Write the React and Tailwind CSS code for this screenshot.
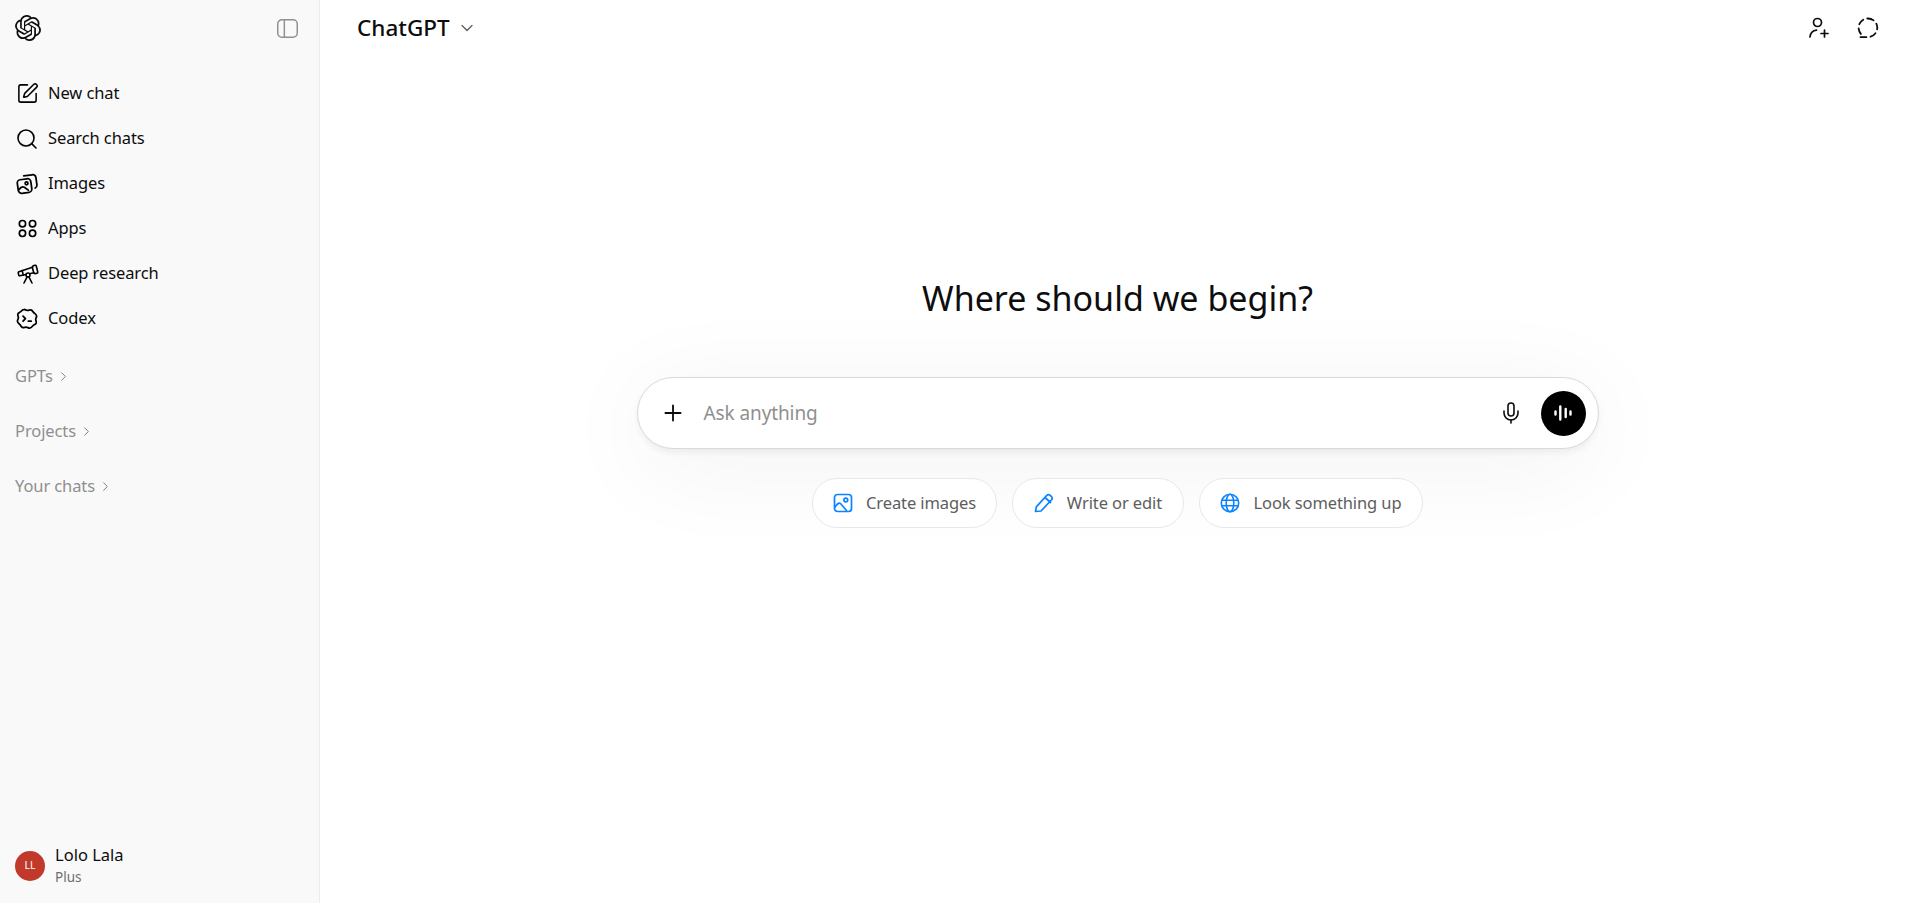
import { ChevronDown, ChevronRight, Mic, Plus, Search, SquarePen, Telescope } from 'lucide-react'
import { SiOpenai } from 'react-icons/si'

function ImagesIcon({ className }) {
  return (
    <svg className={className} viewBox="0 0 20 20" fill="none" stroke="currentColor" strokeWidth="1.6" strokeLinecap="round" strokeLinejoin="round">
      <rect x="1.6" y="5.6" width="12.4" height="12.4" rx="3" transform="rotate(-8 8 12)" />
      <path d="M7 2.6 14.6 1.6c1.8-.2 3.2.9 3.5 2.6l.9 6.4c.2 1.4-.4 2.5-1.5 3.1" />
      <circle cx="9.6" cy="9.4" r="1.3" />
      <path d="M2.6 15.2c1.6-2.4 3.4-3.2 5-2.2l3.6 2.6" />
    </svg>
  )
}

function AppsIcon({ className }) {
  return (
    <svg className={className} viewBox="0 0 20 20" fill="none" stroke="currentColor" strokeWidth="1.6">
      <circle cx="5.2" cy="5.4" r="3" />
      <circle cx="14.800" cy="5.400" r="3" />
      <circle cx="5.200" cy="14.600" r="3" />
      <circle cx="14.800" cy="14.600" r="3" />
    </svg>
  )
}

function CodexIcon({ className }) {
  return (
    <svg className={className} viewBox="0 0 20 20" fill="none" stroke="currentColor" strokeWidth="1.6" strokeLinecap="round" strokeLinejoin="round">
      <path d="M7 1.400c1.500-.3 2.300.8 3.500.8 1.300 0 2.200-.8 3.500-.3 1.200.5 1.400 1.700 2.200 2.400.9.800 2.200 1.200 2.500 2.800.2 1.300-.8 2-.8 3.100 0 1.200.9 2.100.4 3.500-.5 1.300-1.900 1.500-2.800 2.300-1 .9-1.400 2.200-3 2.300-1.300.1-2.100-.9-3.300-.9-1.200 0-2.100.7-3.400.2-1.300-.5-1.600-1.900-2.400-2.700-.9-.9-2-1.400-2.100-2.900-.1-1.300.9-2 .9-3.100 0-1.200-.9-2-.5-3.400.4-1.300 1.700-1.500 2.600-2.200.8-.7 1.200-1.700 2.700-1.900Z" />
      <path d="m6.400 7.400 2.200 2.300-2.200 2.300M11.200 12h2.600" />
    </svg>
  )
}

function PanelIcon({ className }) {
  return (
    <svg className={className} viewBox="0 0 20 20" fill="none" stroke="currentColor" strokeWidth="1.4">
      <rect x="0.7" y="1.7" width="18.600" height="16.600" rx="4" />
      <path d="M7 2v16" />
    </svg>
  )
}

function AddPersonIcon({ className }) {
  return (
    <svg className={className} viewBox="0 0 22 22" fill="none" stroke="currentColor" strokeWidth="1.7" strokeLinecap="round">
      <circle cx="9.500" cy="5.500" r="4" />
      <path d="M2 20c.5-4 2.800-6.500 6.500-6.800M16.500 13v7M13 16.500h7" />
    </svg>
  )
}

function TempChatIcon({ className }) {
  return (
    <svg className={className} viewBox="0 0 22 22" fill="none" stroke="currentColor" strokeWidth="1.800" strokeDasharray="6 4.200" strokeLinecap="round" strokeLinejoin="round">
      <path d="M11 1.500a9.300 9.300 0 0 1 0 18.600H2.600l1.300-3.200A9.300 9.300 0 0 1 11 1.500Z" />
    </svg>
  )
}

function VoiceIcon({ className }) {
  return (
    <svg className={className} viewBox="0 0 20 20" fill="none" stroke="currentColor" strokeWidth="2.400" strokeLinecap="round">
      <path d="M2.500 8.500v3M7.300 3.500v13M12.700 6v8M17.500 8.500v3" />
    </svg>
  )
}

function ImageChipIcon({ className }) {
  return (
    <svg className={className} viewBox="0 0 20 20" fill="none" stroke="currentColor" strokeWidth="1.700" strokeLinecap="round" strokeLinejoin="round">
      <rect x="1.500" y="1.500" width="17" height="17" rx="3" />
      <circle cx="12.800" cy="7" r="1.900" />
      <path d="M2 14c2-3 4-4.500 5.500-3.500l6 7" />
    </svg>
  )
}

function PencilChipIcon({ className }) {
  return (
    <svg className={className} viewBox="0 0 20 20" fill="none" stroke="currentColor" strokeWidth="1.700" strokeLinecap="round" strokeLinejoin="round">
      <path d="M1.500 18.500 2.300 13.800 12.600 2.700c1-1.100 2.500-1.200 3.700-.2l.9.800c1.200 1.100 1.200 2.600.2 3.700L7 18l-5.500.5ZM11 4.500l5.500 5" />
    </svg>
  )
}

function GlobeChipIcon({ className }) {
  return (
    <svg className={className} viewBox="0 0 20 20" fill="none" stroke="currentColor" strokeWidth="1.600">
      <circle cx="10" cy="10" r="8.700" />
      <ellipse cx="10" cy="10" rx="3.800" ry="8.700" />
      <path d="M1.500 7.200h17M1.500 12.800h17" />
    </svg>
  )
}

const navItems = [
  { label: 'New chat', icon: SquarePen, size: 'w-[23px] h-[23px] -ml-[1px]', gap: 'gap-[9px]' },
  { label: 'Search chats', icon: Search, size: 'w-[24px] h-[24px] -ml-[2px]', gap: 'gap-[9px]' },
  { label: 'Images', icon: ImagesIcon, size: 'w-[22px] h-[22px] -ml-[1px]', gap: 'gap-[10px]' },
  { label: 'Apps', icon: AppsIcon, size: 'w-[21px] h-[21px]', gap: 'gap-[10px]' },
  { label: 'Deep research', icon: Telescope, size: 'w-[24px] h-[24px] -ml-[1px]', gap: 'gap-[8px]' },
  { label: 'Codex', icon: CodexIcon, size: 'w-[22px] h-[22px] -ml-[1px]', gap: 'gap-[10px]' },
]

const sections = ['GPTs', 'Projects', 'Your chats']

const chips = [
  { label: 'Create images', icon: ImageChipIcon, width: 'w-[185px]' },
  { label: 'Write or edit', icon: PencilChipIcon, width: 'w-[172px]' },
  { label: 'Look something up', icon: GlobeChipIcon, width: 'w-[224px]' },
]

function Sidebar() {
  return (
    <aside className="w-[320px] shrink-0 h-full flex flex-col bg-[#f9f9f9] border-r border-[#ececec]">
      <div className="h-[56px] shrink-0 flex items-center justify-between pl-[15px] pr-[21px]">
        <SiOpenai className="w-[26px] h-[26px] text-[#0d0d0d]" />
        <PanelIcon className="w-[21px] h-[21px] text-[#8f8f8f]" />
      </div>

      <nav className="mt-[15px] flex flex-col">
        {navItems.map(({ label, icon: Icon, size, gap }) => (
          <div key={label} className={`h-[45px] flex items-center pl-[17px] ${gap}`}>
            <Icon className={`${size} shrink-0`} strokeWidth={1.6} />
            <span className="text-[16.500px] tracking-[-0.1px] text-[#0d0d0d]">{label}</span>
          </div>
        ))}
      </nav>

      <div className="mt-[8px] flex flex-col">
        {sections.map(label => (
          <div key={label} className="h-[55px] flex items-center gap-[3px] pl-[15px] text-[16.500px] tracking-[-0.1px] text-[#8f8f8f]">
            <span>{label}</span>
            <ChevronRight className="w-[15px] h-[15px] text-[#777777]" strokeWidth={1.500} />
          </div>
        ))}
      </div>

      <div className="mt-auto h-[74px] flex items-center gap-[10px] pl-[15px]">
        <div className="w-[30px] h-[30px] rounded-full bg-[#c0392b] flex items-center justify-center text-[10.500px] text-white">LL</div>
        <div className="flex flex-col pb-[2px]">
          <span className="mb-[2px] text-[16.500px] leading-[22px] text-[#0d0d0d]">Lolo Lala</span>
          <span className="text-[13.500px] leading-[19px] text-[#6e6e6e]">Plus</span>
        </div>
      </div>
    </aside>
  )
}

export default function App() {
  return (
    <div className="h-[903px] w-full flex overflow-hidden bg-white font-['Noto_Sans',sans-serif]">
      <Sidebar />

      <main className="flex-1 min-w-0 flex flex-col">
        <header className="h-[56px] shrink-0 flex items-center justify-between pl-[37px] pr-[34px]">
          <div className="flex items-center gap-[7px]">
            <span className="text-[22.500px] font-medium text-[#0d0d0d]">ChatGPT</span>
            <ChevronDown className="w-[20px] h-[20px] text-[#5d5d5d]" strokeWidth={1.500} />
          </div>
          <div className="flex items-center gap-[27px]">
            <AddPersonIcon className="w-[22px] h-[22px] text-[#0d0d0d]" />
            <TempChatIcon className="w-[22px] h-[22px] text-[#0d0d0d]" />
          </div>
        </header>

        <div className="flex flex-col items-center pt-[214px] pl-[2px]">
          <h1 className="text-[34px] leading-[56px] font-normal text-[#0d0d0d]">Where should we begin?</h1>

          <div className="mt-[51px] w-[962px] h-[72px] shrink-0 flex items-center justify-between rounded-[36px] bg-white border border-[#d9d9d9] pl-[22px] pr-[12px] shadow-[0_4px_6px_rgba(0,0,0,0.05),0_16px_100px_rgba(0,0,0,0.06)]">
            <div className="flex items-center gap-[18px]">
              <Plus className="w-[26px] h-[26px] text-[#0d0d0d]" strokeWidth={1.700} />
              <span className="text-[19px] tracking-[-0.1px] text-[#8f8f8f]">Ask anything</span>
            </div>
            <div className="flex items-center gap-[18px]">
              <Mic className="w-[24px] h-[24px] text-[#0d0d0d]" strokeWidth={1.600} />
              <div className="w-[45px] h-[45px] rounded-full bg-black flex items-center justify-center text-white">
                <VoiceIcon className="w-[20px] h-[20px]" />
              </div>
            </div>
          </div>

          <div className="mt-[29px] flex items-center gap-[15px]">
            {chips.map(({ label, icon: Icon, width }) => (
              <div key={label} className={`${width} h-[50px] flex items-center justify-center gap-[13px] rounded-full bg-white border border-[#e8e8e8] text-[16.500px] tracking-[-0.1px] text-[#5d5d5d]`}>
                <Icon className="w-[20px] h-[20px] shrink-0 text-[#0a84ff]" />
                <span>{label}</span>
              </div>
            ))}
          </div>
        </div>
      </main>
    </div>
  )
}
